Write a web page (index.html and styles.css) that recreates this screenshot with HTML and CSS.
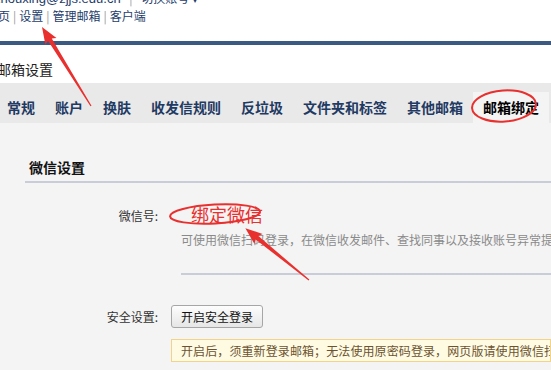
FILE: index.html
```html
<!DOCTYPE html>
<html lang="zh-CN">
<head>
    <meta charset="UTF-8">
    <meta name="viewport" content="width=device-width, initial-scale=1.0">
    <title>邮箱设置</title>
    <link rel="stylesheet" href="styles.css">
</head>
<body>
    <div class="top">
        <div class="user-line">
            <span class="addr">zhouxing@zjjs.edu.cn</span>
            <span class="sep wide">|</span>
            <span class="switch">切换账号 ▾</span>
        </div>
        <div class="links">
            <a class="home">首页</a><span class="sep">|</span><a>设置</a><span class="sep">|</span><a>管理邮箱</a><span class="sep">|</span><a>客户端</a>
        </div>
    </div>
    <div class="blue-bar"></div>

    <h1 class="page-title">邮箱设置</h1>

    <ul class="tabs">
        <li class="tab">常规</li>
        <li class="tab">账户</li>
        <li class="tab">换肤</li>
        <li class="tab">收发信规则</li>
        <li class="tab">反垃圾</li>
        <li class="tab">文件夹和标签</li>
        <li class="tab">其他邮箱</li>
        <li class="tab active">邮箱绑定</li>
    </ul>

    <div class="content">
        <div class="section-title">微信设置</div>

        <div class="form-row wechat-row">
            <div class="label">微信号:</div>
            <div class="field">
                <a class="bind-link">绑定微信</a>
                <p class="desc">可使用微信扫码登录，在微信收发邮件、查找同事以及接收账号异常提醒</p>
                <div class="divider"></div>
            </div>
        </div>

        <div class="form-row safe-row">
            <div class="label">安全设置:</div>
            <div class="field">
                <button class="btn">开启安全登录</button>
            </div>
        </div>
        <div class="form-row">
            <div class="label"></div>
            <div class="field">
                <div class="notice">开启后，须重新登录邮箱；无法使用原密码登录，网页版请使用微信扫码登录</div>
            </div>
        </div>
    </div>

    <!-- red marks drawn over the screenshot -->
    <svg class="marks" width="551" height="370" viewBox="0 0 551 370">
        <g fill="#e8302e">
            <polygon transform="translate(91 106) rotate(-121.8)" points="0,-0.6 78,-2.2 76,-6.5 93,0 76,6.5 78,2.2 0,0.6"/>
            <polygon transform="translate(309 280) rotate(-140.9)" points="0,-0.6 67,-2.2 65,-6.5 82,0 65,6.5 67,2.2 0,0.6"/>
        </g>
        <g fill="none" stroke="#e8302e" stroke-width="2">
            <ellipse cx="504" cy="106" rx="32" ry="15.5" transform="rotate(-4 504 106)"/>
            <ellipse cx="215" cy="214" rx="45" ry="9.5" transform="rotate(-3 215 214)"/>
        </g>
    </svg>
</body>
</html>
```

FILE: styles.css
```css
body {
    margin: 0;
    width: 551px;
    height: 370px;
    overflow: hidden;
    position: relative;
    font-family: "Noto Sans CJK SC", sans-serif;
    font-size: 12px;
    color: #333;
    background-color: #fff;
}
.top {
    margin-top: -11px;
}
.user-line, .links {
    height: 18px;
    line-height: 18px;
    white-space: nowrap;
    color: #1e3d6b;
}
.user-line .addr {
    font-family: "Liberation Sans", sans-serif;
    font-size: 13px;
    margin-left: -6px;
}
.sep {
    color: #999;
    margin: 0 3px;
}
.sep.wide {
    margin: 0 6px;
}
.links a {
    color: #1e3d6b;
}
.links .home {
    margin-left: -14px;
}
.blue-bar {
    height: 4px;
    margin-top: 16px;
    background-color: #3a5a82;
}
.page-title {
    margin: 14px 0 4px -3px;
    font-size: 14px;
    font-weight: normal;
    line-height: 20px;
    color: #222;
}
.tabs {
    display: flex;
    list-style: none;
    margin: 0;
    padding: 9px 0 0 0;
    height: 31px;
    background-color: #e9e9e9;
}
.tab {
    padding: 0 10px;
    line-height: 31px;
    font-size: 14px;
    font-weight: bold;
    color: #1f3a63;
    white-space: nowrap;
}
.tab:first-child {
    margin-left: -3px;
}
.tab.active {
    background-color: #f4f4f4;
    color: #000;
}
.content {
    background-color: #f4f4f4;
    padding-left: 25px;
    height: 247px;
}
.section-title {
    padding: 34px 0 4px 4px;
    line-height: 20px;
    font-size: 14px;
    font-weight: bold;
    color: #111;
    border-bottom: 2px solid #c9ccd9;
}
.form-row {
    display: flex;
}
.label {
    width: 133px;
    padding-right: 13px;
    text-align: right;
    flex-shrink: 0;
    white-space: nowrap;
}
.field {
    flex: 1;
    min-width: 0;
    white-space: nowrap;
}
.wechat-row {
    margin-top: 23px;
}
.wechat-row .label {
    line-height: 20px;
}
.bind-link {
    display: block;
    margin-left: 20px;
    font-size: 18px;
    line-height: 20px;
    color: #e8302e;
    margin-top: -2px;
}
.desc {
    margin: 7px 0 0 10px;
    line-height: 18px;
    color: #8a8a8a;
}
.divider {
    margin: 24px 0 0 10px;
    border-top: 2px solid #c9ccd9;
}
.safe-row {
    margin-top: 30px;
    align-items: center;
}
.btn {
    height: 23px;
    padding: 0 9px;
    font-family: inherit;
    font-size: 12px;
    color: #111;
    border: 1px solid #a6a6a6;
    border-radius: 3px;
    background: linear-gradient(#fdfdfd, #e6e6e6);
}
.notice {
    margin-top: 11px;
    padding-left: 9px;
    line-height: 21px;
    letter-spacing: 0.1px;
    border: 1px solid #f2d38a;
    background-color: #fffbe3;
    color: #6b5331;
    overflow: hidden;
}
.marks {
    position: absolute;
    top: 0;
    left: 0;
    pointer-events: none;
}
```
